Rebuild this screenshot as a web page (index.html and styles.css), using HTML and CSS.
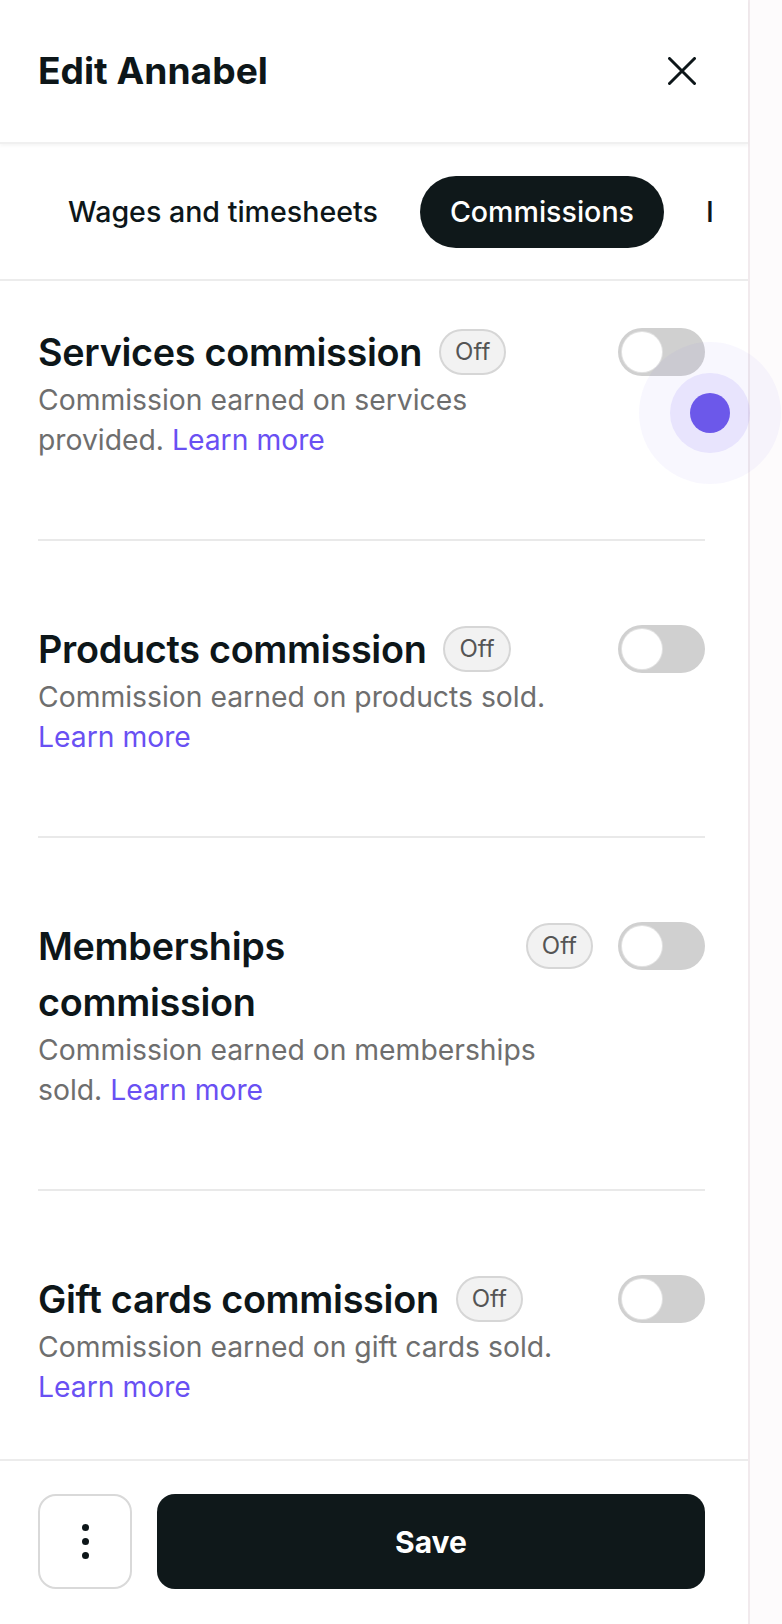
FILE: index.html
```html
<!DOCTYPE html>
<html lang="en">
<head>
<meta charset="utf-8">
<title>Edit Annabel</title>
<link rel="stylesheet" href="styles.css">
</head>
<body>
<div class="screen">
  <aside class="panel">
    <header class="header">
      <h1 class="header-title">Edit Annabel</h1>
      <button class="close" aria-label="Close">
        <svg viewBox="0 0 28 28" width="28" height="28"><path d="M1.5 1.5 L26.5 26.5 M26.5 1.5 L1.5 26.5" stroke="#0d1619" stroke-width="3" stroke-linecap="round" fill="none"/></svg>
      </button>
    </header>

    <nav class="tabs">
      <div class="tabs-track">
        <span class="tab">Wages and timesheets</span>
        <span class="tab tab-active">Commissions</span>
        <span class="tab tab-peek">Info</span>
      </div>
    </nav>

    <main class="content">
      <section class="item">
        <div class="item-head">
          <div class="title-wrap">
            <h2 class="item-title">Services commission</h2>
            <span class="badge">Off</span>
          </div>
          <span class="toggle"><span class="knob"></span></span>
        </div>
        <p class="desc">Commission earned on services provided. <a class="link">Learn more</a></p>
      </section>

      <section class="item">
        <div class="item-head">
          <div class="title-wrap">
            <h2 class="item-title">Products commission</h2>
            <span class="badge">Off</span>
          </div>
          <span class="toggle"><span class="knob"></span></span>
        </div>
        <p class="desc">Commission earned on products sold. <a class="link">Learn more</a></p>
      </section>

      <section class="item">
        <div class="item-head">
          <div class="title-wrap">
            <h2 class="item-title">Memberships commission</h2>
            <span class="badge">Off</span>
          </div>
          <span class="toggle"><span class="knob"></span></span>
        </div>
        <p class="desc">Commission earned on memberships sold. <a class="link">Learn more</a></p>
      </section>

      <section class="item">
        <div class="item-head">
          <div class="title-wrap">
            <h2 class="item-title">Gift cards commission</h2>
            <span class="badge">Off</span>
          </div>
          <span class="toggle"><span class="knob"></span></span>
        </div>
        <p class="desc">Commission earned on gift cards sold. <a class="link">Learn more</a></p>
      </section>
    </main>

    <footer class="footer">
      <button class="more" aria-label="More options">
        <span class="dot"></span><span class="dot"></span><span class="dot"></span>
      </button>
      <button class="save">Save</button>
    </footer>

    <div class="touch"><div class="touch-mid"><div class="touch-dot"></div></div></div>
  </aside>
</div>
</body>
</html>
```

FILE: styles.css
```css
* { box-sizing: border-box; }

html, body {
  margin: 0;
  padding: 0;
  background: #fdfbfc;
}

body {
  font-family: Inter, "Noto Sans", "Liberation Sans", sans-serif;
  color: #0d1619;
}

.screen {
  width: 782px;
  height: 1624px;
  overflow: hidden;
}

.panel {
  position: relative;
  width: 750px;
  height: 1624px;
  background: #ffffff;
  border-right: 2px solid #f1eaed;
  display: flex;
  flex-direction: column;
}

/* Header */
.header {
  height: 144px;
  flex: none;
  display: flex;
  align-items: center;
  justify-content: space-between;
  padding: 0 44px 0 38px;
  border-bottom: 2px solid #f0f0f0;
  box-shadow: 0 2px 3px rgba(0, 0, 0, 0.04);
  position: relative;
  z-index: 1;
}

.header-title {
  margin: 0;
  font-size: 37.2px;
  font-weight: 700;
  line-height: 44px;
}

.close {
  width: 44px;
  height: 44px;
  border: 0;
  background: none;
  padding: 0;
  display: flex;
  align-items: center;
  justify-content: center;
}

/* Tabs */
.tabs {
  flex: none;
  height: 137px;
  padding: 32px 0 0 38px;
  border-bottom: 2px solid #ececec;
}

.tabs-track {
  display: flex;
  gap: 12px;
  overflow: hidden;
  white-space: nowrap;
}

.tab {
  flex: none;
  height: 72px;
  line-height: 72px;
  padding: 0 30px;
  border-radius: 36px;
  font-size: 28.6px;
  font-weight: 500;
  color: #0d1619;
}

.tab-active {
  background: #0f181a;
  color: #ffffff;
}

.tab-peek {
  max-width: 37px;
  overflow: hidden;
  padding-right: 0;
}

/* Content */
.content {
  flex: 1;
  overflow: hidden;
  padding: 0 43px 0 38px;
}

.item {
  padding: 80px 0 79px;
  border-bottom: 2px solid #e9e9e9;
}

.item:first-child {
  padding-top: 43px;
}

.item:last-child {
  border-bottom: 0;
}

.item-head {
  display: flex;
  align-items: flex-start;
  gap: 25px;
}

.title-wrap {
  flex: 1;
  display: flex;
  align-items: flex-start;
  gap: 17px;
  min-width: 0;
}

.item-title {
  margin: 0;
  font-size: 37.8px;
  line-height: 56px;
  font-weight: 600;
  letter-spacing: -0.3px;
  color: #0d1619;
}

.badge {
  flex: none;
  margin-top: 5px;
  height: 46px;
  padding: 0 14px;
  border: 2px solid #d6d6d6;
  border-radius: 23px;
  background: #f2f2f2;
  font-size: 24px;
  line-height: 42px;
  color: #555555;
}

.toggle {
  flex: none;
  margin-top: 4px;
  width: 87px;
  height: 48px;
  border-radius: 24px;
  background: #d0d0d0;
  padding: 4px;
  display: flex;
}

.knob {
  width: 40px;
  height: 40px;
  border-radius: 50%;
  background: #ffffff;
  box-shadow: 0 0 0 1px #e2e2e2;
}

.desc {
  margin: 0;
  max-width: 540px;
  font-size: 28.3px;
  line-height: 40px;
  color: #6e6e6e;
}

.link {
  color: #6950f3;
  text-decoration: none;
}

/* Footer */
.footer {
  flex: none;
  height: 165px;
  border-top: 2px solid #ececec;
  padding: 33px 43px 35px 38px;
  display: flex;
  gap: 25px;
}

.more {
  flex: none;
  width: 94px;
  height: 95px;
  border: 2px solid #d9d9d9;
  border-radius: 18px;
  background: #ffffff;
  display: flex;
  flex-direction: column;
  align-items: center;
  justify-content: center;
  gap: 7px;
  padding: 0;
}

.dot {
  width: 7px;
  height: 7px;
  border-radius: 50%;
  background: #0d1619;
}

.save {
  flex: 1;
  height: 95px;
  border: 0;
  border-radius: 18px;
  background: #0f181a;
  color: #ffffff;
  font-family: Inter, "Noto Sans", "Liberation Sans", sans-serif;
  font-size: 30px;
  font-weight: 700;
}

/* Touch indicator overlay */
.touch {
  position: absolute;
  left: 639px;
  top: 342px;
  width: 142px;
  height: 142px;
  border-radius: 50%;
  background: rgba(120, 100, 245, 0.05);
  display: flex;
  align-items: center;
  justify-content: center;
  z-index: 2;
}

.touch-mid {
  width: 80px;
  height: 80px;
  border-radius: 50%;
  background: rgba(120, 100, 245, 0.13);
  display: flex;
  align-items: center;
  justify-content: center;
}

.touch-dot {
  width: 40px;
  height: 40px;
  border-radius: 50%;
  background: #6c58ea;
}
```
